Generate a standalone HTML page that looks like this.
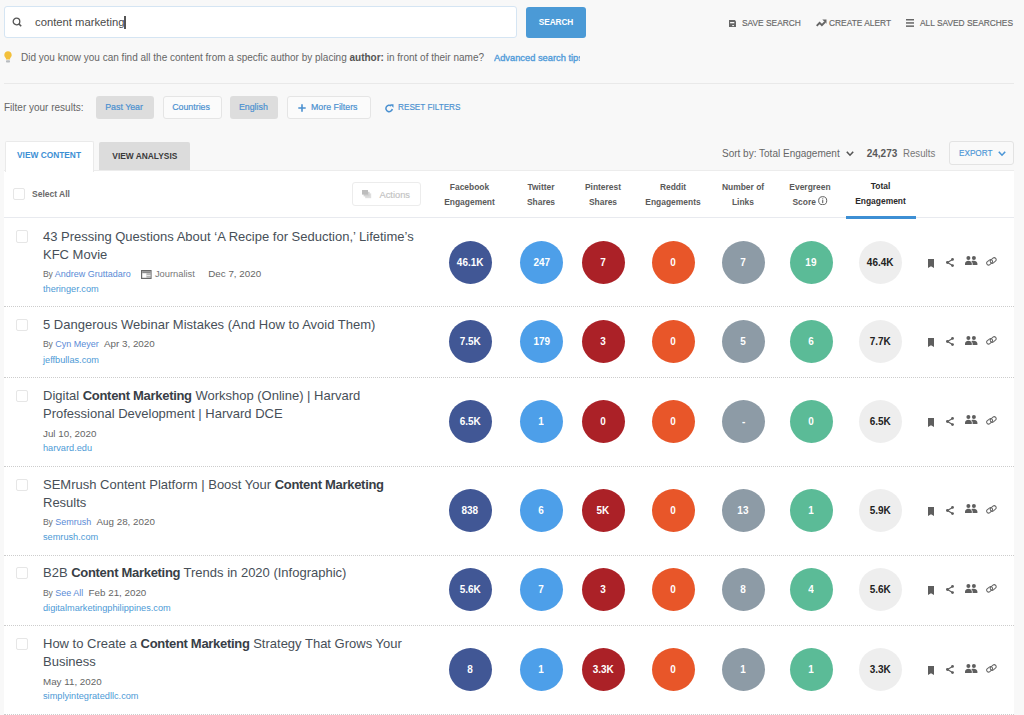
<!DOCTYPE html>
<html><head><meta charset="utf-8">
<style>
*{box-sizing:border-box;margin:0;padding:0}
html,body{width:1024px;height:715px;overflow:hidden;background:#f8f8f8;font-family:"Liberation Sans",sans-serif;color:#555}
.a{position:absolute}
.nw{white-space:nowrap}
#search{left:4px;top:6px;width:513px;height:32px;background:#fff;border:1px solid #d5e5f3;border-radius:3px}
#sbtn{left:526px;top:6.5px;width:60px;height:31.5px;background:#4b9ad6;border-radius:3px;color:#fff;font-size:8.3px;font-weight:bold;letter-spacing:-0.1px;text-align:center;line-height:31.5px}
.tl{font-size:9.3px;color:#666;top:18.2px;-webkit-text-stroke:0.15px #666;line-height:10px;white-space:nowrap;transform:scaleX(0.9);transform-origin:0 0}
.tip{font-size:10px;color:#666;top:52px;line-height:12px;white-space:nowrap}
.sx{display:inline-block;transform:scaleX(0.94);margin-right:2px}
.fbtn{top:96px;height:23.3px;border-radius:3px;font-size:9.4px;color:#4a90d0;-webkit-text-stroke:0.2px #4a90d0;line-height:22.8px;text-align:center;white-space:nowrap}
.fg{background:#dddddd}
.fw{background:#fbfbfb;border:1px solid #e5e5e5;line-height:20.8px}
#panel{left:4px;top:170px;width:1010px;height:545px;background:#fff;border-top:1px solid #ececec}
.hd{font-size:8.45px;color:#5a5a5a;font-weight:bold;text-align:center;line-height:15px;top:179.5px;white-space:nowrap}
.row{left:4px;width:1010px;border-bottom:1px dotted #cdcdcd}
.cb{left:15.5px;width:12.2px;height:12.2px;border:1px solid #e6e6e6;border-radius:2px;background:#fff}
.title{left:43px;font-size:13px;line-height:18.3px;color:#474f58}
.title b{color:#383e46;letter-spacing:-0.3px}
.meta{left:43px;font-size:9px;color:#666;white-space:nowrap;line-height:11px}
.meta .au{color:#5b8bd6;margin-left:0px}
.meta .by{font-size:8.6px;letter-spacing:-0.2px;color:#6a6a6a}
.meta .dt{margin-left:5.4px;font-size:9.8px}
.meta .dt0{font-size:9.8px}
.meta .jd{margin-left:13.4px;font-size:9.8px}
.meta .jr{margin-left:3px;font-size:9.35px}
.meta .jicon{display:inline-block;width:10.6px;height:9px;margin-left:10.6px;vertical-align:-1.5px;position:relative;top:1px}
.meta .jr{color:#777}
.dom{left:43px;font-size:9.2px;color:#4d9ad6;white-space:nowrap;line-height:11px}
.c span{display:inline-block;transform:scaleX(0.94)}
.c{width:43px;height:43px;border-radius:50%;color:#fff;font-size:10.6px;font-weight:bold;text-align:center;line-height:43px}
.fb{background:#415795}.tw{background:#4d9fe9}.pi{background:#ab2127}.rd{background:#e85629}.ln{background:#8d9ba6}.ev{background:#5bbb97}.te{background:#eeeeee;color:#222}

</style></head><body>
<div id="search" class="a"></div>
<svg class="a" style="left:12px;top:17px" width="10" height="10" viewBox="0 0 10 10"><circle cx="4.5" cy="4.5" r="3.3" stroke="#555" stroke-width="1.3" fill="none"/><path d="M6.9 6.9L9.2 9.2" stroke="#555" stroke-width="1.5"/></svg>
<div class="a nw" style="left:35px;top:15px;font-size:11.25px;line-height:14px;color:#4a4a4a">content marketing</div>
<div class="a" style="left:124.4px;top:16px;width:1.2px;height:12.7px;background:#555"></div>
<div id="sbtn" class="a">SEARCH</div>
<svg class="a" style="left:728.9px;top:19.9px" width="7" height="7.2" viewBox="0 0 7 7.2"><path d="M0 0h5.8L7 1.2V7.2H0z" fill="#666"/><rect x="1.1" y="2" width="4.2" height="1.3" fill="#f8f8f8"/><rect x="3.2" y="5" width="1.8" height="1.1" fill="#eee"/></svg>
<div class="a tl" style="left:742px">SAVE SEARCH</div>
<svg class="a" style="left:815.5px;top:19px" width="11" height="8" viewBox="0 0 11 8"><path d="M0.7 6.8L3.6 3.8l2.3 2.3L9 3" stroke="#666" stroke-width="1.9" fill="none"/><path d="M6.3 0.6h4.2v4.2z" fill="#666"/></svg>
<div class="a tl" style="left:829px">CREATE ALERT</div>
<svg class="a" style="left:906px;top:19px" width="8" height="8" viewBox="0 0 8 8"><rect y="0" width="8" height="1.5" fill="#666"/><rect y="3.2" width="8" height="1.5" fill="#666"/><rect y="6.4" width="8" height="1.5" fill="#666"/></svg>
<div class="a tl" style="left:919.5px">ALL SAVED SEARCHES</div>
<svg class="a" style="left:4px;top:51px" width="8" height="12" viewBox="0 0 8 12"><path d="M4 0.3C1.9 0.3 0.3 1.9 0.3 3.9c0 1.4 0.8 2.4 1.6 3.3V8.5h4.2V7.2c0.8-0.9 1.6-1.9 1.6-3.3C7.7 1.9 6.1 0.3 4 0.3z" fill="#f3c03b"/><rect x="2" y="9.2" width="4" height="2.3" rx="0.8" fill="#b8bcc0"/></svg>
<div class="a tip" style="left:21px">Did you know you can find all the content from a specfic author by placing <b style="color:#555">author:</b> in front of their name?</div>
<div class="a tip" style="left:494px;top:51.5px;width:86px;overflow:hidden;color:#509bd9;font-size:9.3px;-webkit-text-stroke:0.35px #509bd9">Advanced search tips</div>
<div class="a" style="left:4px;top:83px;width:1010px;height:1px;background:#e9e9e9"></div>
<div class="a nw" style="left:4px;top:102px;font-size:10px;line-height:12px;color:#666">Filter your results:</div>
<div class="a fbtn fg" style="left:96px;width:58px"><span class="sx">Past Year</span></div>
<div class="a fbtn fw" style="left:163px;width:58.5px"><span class="sx">Countries</span></div>
<div class="a fbtn fg" style="left:230px;width:48.4px"><span class="sx">English</span></div>
<div class="a fbtn fw" style="left:287px;width:83.5px;text-align:left;padding-left:23px"><span class="sx" style="transform-origin:0 50%">More Filters</span></div>
<svg class="a" style="left:298px;top:103.5px" width="8" height="8" viewBox="0 0 8 8"><path d="M4 0.3V7.7M0.3 4H7.7" stroke="#4a90d0" stroke-width="1.6"/></svg>
<svg class="a" style="left:385px;top:103.5px" width="9" height="9" viewBox="0 0 9 9"><path d="M7.3 5A3.2 3.2 0 1 1 6.2 2" stroke="#4a90d0" stroke-width="1.5" fill="none"/><path d="M5 0.3L8.5 0.3 8.5 3.8z" fill="#4a90d0"/></svg>
<div class="a nw" style="left:397.5px;top:100.8px;font-size:9px;line-height:12px;color:#4a90d0;-webkit-text-stroke:0.15px #4a90d0;transform:scaleX(0.91);transform-origin:0 0">RESET FILTERS</div>

<div class="a" style="left:99.3px;top:141.8px;width:91px;height:28.4px;background:#dcdcdc;border-radius:2px 2px 0 0"></div>
<div class="a nw" style="left:99.3px;top:149.5px;width:91px;text-align:center;font-size:8.4px;font-weight:bold;line-height:12px;color:#3a3a3a">VIEW ANALYSIS</div>
<div class="a nw" style="left:722px;top:148px;font-size:10px;line-height:12px;color:#666">Sort by: Total Engagement</div>
<svg class="a" style="left:845.6px;top:151px" width="8" height="6" viewBox="0 0 8 6"><path d="M0.8 0.8L4 4.2 7.2 0.8" stroke="#555" stroke-width="1.6" fill="none"/></svg>
<div class="a nw" style="left:866.7px;top:148.2px;font-size:10px;line-height:12px;color:#5a5a5a;font-weight:bold">24,273</div>
<div class="a nw" style="left:902.8px;top:147.6px;font-size:10.4px;line-height:12px;color:#777;transform:scaleX(0.93);transform-origin:0 0">Results</div>
<div class="a" style="left:949.4px;top:141.4px;width:64.3px;height:23.2px;background:#f9f9f9;border:1px solid #e3e3e3;border-radius:3px"></div>
<div class="a nw" style="left:958.5px;top:147.3px;font-size:9.2px;line-height:12px;color:#4a95d6;-webkit-text-stroke:0.15px #4a95d6;transform:scaleX(0.89);transform-origin:0 0">EXPORT</div>
<svg class="a" style="left:998px;top:150.5px" width="8" height="6" viewBox="0 0 8 6"><path d="M0.8 0.8L4 4.2 7.2 0.8" stroke="#4a95d6" stroke-width="1.6" fill="none"/></svg>
<div id="panel" class="a"></div>
<div class="a" style="left:4.5px;top:141.4px;width:89px;height:30.6px;background:#fff;border:1px solid #eaeaea;border-bottom:none;border-radius:2px 2px 0 0"></div>
<div class="a nw" style="left:4.5px;top:149px;width:89px;text-align:center;font-size:8.35px;font-weight:bold;line-height:12px;color:#3d8fd4">VIEW CONTENT</div>
<div class="a" style="left:4px;top:217px;width:1010px;height:1px;background:#e8eaef"></div>
<div class="a cb" style="left:13.3px;top:188px"></div>
<div class="a nw" style="left:32px;top:188px;font-size:8.5px;line-height:12px;color:#6a6a6a;font-weight:bold">Select All</div>
<div class="a" style="left:351.6px;top:182px;width:69px;height:23.7px;border:1px solid #ececec;border-radius:3px"></div>
<svg class="a" style="left:362px;top:189.8px" width="10" height="9" viewBox="0 0 10 9"><rect x="3.2" y="3.4" width="6" height="4.8" fill="#dedede"/><rect x="1.6" y="1.8" width="6" height="4.6" fill="#d2d2d2"/><rect x="0" y="0" width="6" height="4.6" fill="#bdbdbd"/></svg>
<div class="a nw" style="left:379.5px;top:188.5px;font-size:9.3px;line-height:12px;color:#c2c2c2;-webkit-text-stroke:0.15px #c2c2c2">Actions</div>
<div class="a hd" style="left:429.5px;width:80px">Facebook<br>Engagement</div>
<div class="a hd" style="left:501px;width:80px">Twitter<br>Shares</div>
<div class="a hd" style="left:563px;width:80px">Pinterest<br>Shares</div>
<div class="a hd" style="left:633px;width:80px">Reddit<br>Engagements</div>
<div class="a hd" style="left:703px;width:80px">Number of<br>Links</div>
<div class="a hd" style="left:770px;width:80px">Evergreen<br>Score <svg style="display:inline-block;vertical-align:0;position:relative;top:0.8px" width="9.4" height="9.4" viewBox="0 0 10 10"><circle cx="5" cy="5" r="4.3" stroke="#555" stroke-width="1" fill="none"/><rect x="4.4" y="4.3" width="1.2" height="3.3" fill="#666"/><rect x="4.4" y="2.5" width="1.2" height="1.1" fill="#666"/></svg></div>
<div class="a hd" style="left:840.5px;width:80px;color:#2a2a2a;top:178.7px">Total<br>Engagement</div>
<div class="a" style="left:846px;top:216.2px;width:69.5px;height:2.8px;background:#3d8fd4"></div>
<div class="a row" style="top:217.6px;height:89.7px"></div>
<div class="a cb" style="top:230.4px"></div>
<div class="a title nw" style="top:227.5px">43 Pressing Questions About ‘A Recipe for Seduction,’ Lifetime’s<br>KFC Movie</div>
<div class="a meta" style="top:267.6px"><span class="by">By</span> <span class="au">Andrew Gruttadaro</span><svg class="jicon" viewBox="0 0 10.6 9"><rect x="0.6" y="0.6" width="9.4" height="7.8" fill="#fff" stroke="#6a6a6a" stroke-width="1.2"/><rect x="1.2" y="1.2" width="8.2" height="2" fill="#8c8c8c"/><rect x="5.4" y="3.2" width="4" height="4.6" fill="#b5b5b5"/><rect x="5.4" y="5.2" width="4" height="0.7" fill="#fff"/></svg><span class="jr">Journalist</span><span class="jd">Dec 7, 2020</span></div>
<div class="a dom" style="top:284.0px">theringer.com</div>
<div class="a c fb" style="left:448.8px;top:240.5px"><span>46.1K</span></div>
<div class="a c tw" style="left:519.9px;top:240.5px"><span>247</span></div>
<div class="a c pi" style="left:581.6px;top:240.5px"><span>7</span></div>
<div class="a c rd" style="left:651.9px;top:240.5px"><span>0</span></div>
<div class="a c ln" style="left:721.8px;top:240.5px"><span>7</span></div>
<div class="a c ev" style="left:789.5px;top:240.5px"><span>19</span></div>
<div class="a c te" style="left:859.0px;top:240.5px"><span>46.4K</span></div>
<svg class="a" style="left:928.2px;top:258.7px" width="6" height="9" viewBox="0 0 6 9"><path d="M0 0h6v9L3 7.3 0 9z" fill="#5e5e5e"/></svg>
<svg class="a" style="left:946px;top:257.8px" width="8" height="9" viewBox="0 0 8 9"><path d="M6.5 1.5L1.5 4.5l5 3" stroke="#5e5e5e" stroke-width="1.2" fill="none"/><circle cx="6.5" cy="1.4" r="1.4" fill="#5e5e5e"/><circle cx="1.4" cy="4.5" r="1.4" fill="#5e5e5e"/><circle cx="6.5" cy="7.6" r="1.4" fill="#5e5e5e"/></svg>
<svg class="a" style="left:964.5px;top:256.0px" width="13" height="9" viewBox="0 0 13 9"><circle cx="3.4" cy="2" r="2" fill="#5e5e5e"/><circle cx="8.9" cy="2" r="2" fill="#5e5e5e"/><path d="M0 9V7.6C0 6 1.7 4.8 3.4 4.8S6.8 6 6.8 7.6V9z" fill="#5e5e5e"/><path d="M6.2 5.2C7 4.9 7.9 4.8 8.9 4.8 10.6 4.8 12.4 6 12.4 7.6V9H7.6V7.6C7.6 6.6 7.1 5.8 6.2 5.2z" fill="#5e5e5e"/></svg>
<svg class="a" style="left:985.5px;top:256.8px" width="11" height="9" viewBox="0 0 11 9"><g stroke="#666" stroke-width="1" fill="none"><rect x="0.4" y="3.4" width="6.4" height="3.8" rx="1.9" transform="rotate(-40 3.6 5.3)"/><rect x="4" y="1.6" width="6.4" height="3.8" rx="1.9" transform="rotate(-40 7.2 3.5)"/></g></svg>
<div class="a row" style="top:306.4px;height:71.3px"></div>
<div class="a cb" style="top:319.2px"></div>
<div class="a title nw" style="top:316.3px">5 Dangerous Webinar Mistakes (And How to Avoid Them)</div>
<div class="a meta" style="top:338.1px"><span class="by">By</span> <span class="au">Cyn Meyer</span><span class="dt">Apr 3, 2020</span></div>
<div class="a dom" style="top:354.5px">jeffbullas.com</div>
<div class="a c fb" style="left:448.8px;top:320.1px"><span>7.5K</span></div>
<div class="a c tw" style="left:519.9px;top:320.1px"><span>179</span></div>
<div class="a c pi" style="left:581.6px;top:320.1px"><span>3</span></div>
<div class="a c rd" style="left:651.9px;top:320.1px"><span>0</span></div>
<div class="a c ln" style="left:721.8px;top:320.1px"><span>5</span></div>
<div class="a c ev" style="left:789.5px;top:320.1px"><span>6</span></div>
<div class="a c te" style="left:859.0px;top:320.1px"><span>7.7K</span></div>
<svg class="a" style="left:928.2px;top:338.3px" width="6" height="9" viewBox="0 0 6 9"><path d="M0 0h6v9L3 7.3 0 9z" fill="#5e5e5e"/></svg>
<svg class="a" style="left:946px;top:337.4px" width="8" height="9" viewBox="0 0 8 9"><path d="M6.5 1.5L1.5 4.5l5 3" stroke="#5e5e5e" stroke-width="1.2" fill="none"/><circle cx="6.5" cy="1.4" r="1.4" fill="#5e5e5e"/><circle cx="1.4" cy="4.5" r="1.4" fill="#5e5e5e"/><circle cx="6.5" cy="7.6" r="1.4" fill="#5e5e5e"/></svg>
<svg class="a" style="left:964.5px;top:335.6px" width="13" height="9" viewBox="0 0 13 9"><circle cx="3.4" cy="2" r="2" fill="#5e5e5e"/><circle cx="8.9" cy="2" r="2" fill="#5e5e5e"/><path d="M0 9V7.6C0 6 1.7 4.8 3.4 4.8S6.8 6 6.8 7.6V9z" fill="#5e5e5e"/><path d="M6.2 5.2C7 4.9 7.9 4.8 8.9 4.8 10.6 4.8 12.4 6 12.4 7.6V9H7.6V7.6C7.6 6.6 7.1 5.8 6.2 5.2z" fill="#5e5e5e"/></svg>
<svg class="a" style="left:985.5px;top:336.4px" width="11" height="9" viewBox="0 0 11 9"><g stroke="#666" stroke-width="1" fill="none"><rect x="0.4" y="3.4" width="6.4" height="3.8" rx="1.9" transform="rotate(-40 3.6 5.3)"/><rect x="4" y="1.6" width="6.4" height="3.8" rx="1.9" transform="rotate(-40 7.2 3.5)"/></g></svg>
<div class="a row" style="top:376.8px;height:89.8px"></div>
<div class="a cb" style="top:389.6px"></div>
<div class="a title nw" style="top:386.7px">Digital <b>Content Marketing</b> Workshop (Online) | Harvard<br>Professional Development | Harvard DCE</div>
<div class="a meta" style="top:427.9px"><span class="dt0">Jul 10, 2020</span></div>
<div class="a dom" style="top:442.8px">harvard.edu</div>
<div class="a c fb" style="left:448.8px;top:399.8px"><span>6.5K</span></div>
<div class="a c tw" style="left:519.9px;top:399.8px"><span>1</span></div>
<div class="a c pi" style="left:581.6px;top:399.8px"><span>0</span></div>
<div class="a c rd" style="left:651.9px;top:399.8px"><span>0</span></div>
<div class="a c ln" style="left:721.8px;top:399.8px"><span>-</span></div>
<div class="a c ev" style="left:789.5px;top:399.8px"><span>0</span></div>
<div class="a c te" style="left:859.0px;top:399.8px"><span>6.5K</span></div>
<svg class="a" style="left:928.2px;top:417.9px" width="6" height="9" viewBox="0 0 6 9"><path d="M0 0h6v9L3 7.3 0 9z" fill="#5e5e5e"/></svg>
<svg class="a" style="left:946px;top:417.1px" width="8" height="9" viewBox="0 0 8 9"><path d="M6.5 1.5L1.5 4.5l5 3" stroke="#5e5e5e" stroke-width="1.2" fill="none"/><circle cx="6.5" cy="1.4" r="1.4" fill="#5e5e5e"/><circle cx="1.4" cy="4.5" r="1.4" fill="#5e5e5e"/><circle cx="6.5" cy="7.6" r="1.4" fill="#5e5e5e"/></svg>
<svg class="a" style="left:964.5px;top:415.2px" width="13" height="9" viewBox="0 0 13 9"><circle cx="3.4" cy="2" r="2" fill="#5e5e5e"/><circle cx="8.9" cy="2" r="2" fill="#5e5e5e"/><path d="M0 9V7.6C0 6 1.7 4.8 3.4 4.8S6.8 6 6.8 7.6V9z" fill="#5e5e5e"/><path d="M6.2 5.2C7 4.9 7.9 4.8 8.9 4.8 10.6 4.8 12.4 6 12.4 7.6V9H7.6V7.6C7.6 6.6 7.1 5.8 6.2 5.2z" fill="#5e5e5e"/></svg>
<svg class="a" style="left:985.5px;top:416.1px" width="11" height="9" viewBox="0 0 11 9"><g stroke="#666" stroke-width="1" fill="none"><rect x="0.4" y="3.4" width="6.4" height="3.8" rx="1.9" transform="rotate(-40 3.6 5.3)"/><rect x="4" y="1.6" width="6.4" height="3.8" rx="1.9" transform="rotate(-40 7.2 3.5)"/></g></svg>
<div class="a row" style="top:465.7px;height:89.9px"></div>
<div class="a cb" style="top:478.5px"></div>
<div class="a title nw" style="top:475.6px">SEMrush Content Platform | Boost Your <b>Content Marketing</b><br>Results</div>
<div class="a meta" style="top:515.7px"><span class="by">By</span> <span class="au">Semrush</span><span class="dt">Aug 28, 2020</span></div>
<div class="a dom" style="top:532.1px">semrush.com</div>
<div class="a c fb" style="left:448.8px;top:488.7px"><span>838</span></div>
<div class="a c tw" style="left:519.9px;top:488.7px"><span>6</span></div>
<div class="a c pi" style="left:581.6px;top:488.7px"><span>5K</span></div>
<div class="a c rd" style="left:651.9px;top:488.7px"><span>0</span></div>
<div class="a c ln" style="left:721.8px;top:488.7px"><span>13</span></div>
<div class="a c ev" style="left:789.5px;top:488.7px"><span>1</span></div>
<div class="a c te" style="left:859.0px;top:488.7px"><span>5.9K</span></div>
<svg class="a" style="left:928.2px;top:506.9px" width="6" height="9" viewBox="0 0 6 9"><path d="M0 0h6v9L3 7.3 0 9z" fill="#5e5e5e"/></svg>
<svg class="a" style="left:946px;top:506.0px" width="8" height="9" viewBox="0 0 8 9"><path d="M6.5 1.5L1.5 4.5l5 3" stroke="#5e5e5e" stroke-width="1.2" fill="none"/><circle cx="6.5" cy="1.4" r="1.4" fill="#5e5e5e"/><circle cx="1.4" cy="4.5" r="1.4" fill="#5e5e5e"/><circle cx="6.5" cy="7.6" r="1.4" fill="#5e5e5e"/></svg>
<svg class="a" style="left:964.5px;top:504.2px" width="13" height="9" viewBox="0 0 13 9"><circle cx="3.4" cy="2" r="2" fill="#5e5e5e"/><circle cx="8.9" cy="2" r="2" fill="#5e5e5e"/><path d="M0 9V7.6C0 6 1.7 4.8 3.4 4.8S6.8 6 6.8 7.6V9z" fill="#5e5e5e"/><path d="M6.2 5.2C7 4.9 7.9 4.8 8.9 4.8 10.6 4.8 12.4 6 12.4 7.6V9H7.6V7.6C7.6 6.6 7.1 5.8 6.2 5.2z" fill="#5e5e5e"/></svg>
<svg class="a" style="left:985.5px;top:505.0px" width="11" height="9" viewBox="0 0 11 9"><g stroke="#666" stroke-width="1" fill="none"><rect x="0.4" y="3.4" width="6.4" height="3.8" rx="1.9" transform="rotate(-40 3.6 5.3)"/><rect x="4" y="1.6" width="6.4" height="3.8" rx="1.9" transform="rotate(-40 7.2 3.5)"/></g></svg>
<div class="a row" style="top:554.0px;height:72.1px"></div>
<div class="a cb" style="top:566.8px"></div>
<div class="a title nw" style="top:563.9px">B2B <b>Content Marketing</b> Trends in 2020 (Infographic)</div>
<div class="a meta" style="top:586.5px"><span class="by">By</span> <span class="au">See All</span><span class="dt">Feb 21, 2020</span></div>
<div class="a dom" style="top:602.9px">digitalmarketingphilippines.com</div>
<div class="a c fb" style="left:448.8px;top:568.1px"><span>5.6K</span></div>
<div class="a c tw" style="left:519.9px;top:568.1px"><span>7</span></div>
<div class="a c pi" style="left:581.6px;top:568.1px"><span>3</span></div>
<div class="a c rd" style="left:651.9px;top:568.1px"><span>0</span></div>
<div class="a c ln" style="left:721.8px;top:568.1px"><span>8</span></div>
<div class="a c ev" style="left:789.5px;top:568.1px"><span>4</span></div>
<div class="a c te" style="left:859.0px;top:568.1px"><span>5.6K</span></div>
<svg class="a" style="left:928.2px;top:586.3px" width="6" height="9" viewBox="0 0 6 9"><path d="M0 0h6v9L3 7.3 0 9z" fill="#5e5e5e"/></svg>
<svg class="a" style="left:946px;top:585.4px" width="8" height="9" viewBox="0 0 8 9"><path d="M6.5 1.5L1.5 4.5l5 3" stroke="#5e5e5e" stroke-width="1.2" fill="none"/><circle cx="6.5" cy="1.4" r="1.4" fill="#5e5e5e"/><circle cx="1.4" cy="4.5" r="1.4" fill="#5e5e5e"/><circle cx="6.5" cy="7.6" r="1.4" fill="#5e5e5e"/></svg>
<svg class="a" style="left:964.5px;top:583.6px" width="13" height="9" viewBox="0 0 13 9"><circle cx="3.4" cy="2" r="2" fill="#5e5e5e"/><circle cx="8.9" cy="2" r="2" fill="#5e5e5e"/><path d="M0 9V7.6C0 6 1.7 4.8 3.4 4.8S6.8 6 6.8 7.6V9z" fill="#5e5e5e"/><path d="M6.2 5.2C7 4.9 7.9 4.8 8.9 4.8 10.6 4.8 12.4 6 12.4 7.6V9H7.6V7.6C7.6 6.6 7.1 5.8 6.2 5.2z" fill="#5e5e5e"/></svg>
<svg class="a" style="left:985.5px;top:584.4px" width="11" height="9" viewBox="0 0 11 9"><g stroke="#666" stroke-width="1" fill="none"><rect x="0.4" y="3.4" width="6.4" height="3.8" rx="1.9" transform="rotate(-40 3.6 5.3)"/><rect x="4" y="1.6" width="6.4" height="3.8" rx="1.9" transform="rotate(-40 7.2 3.5)"/></g></svg>
<div class="a row" style="top:625.2px;height:89.5px"></div>
<div class="a cb" style="top:638.0px"></div>
<div class="a title nw" style="top:635.1px">How to Create a <b>Content Marketing</b> Strategy That Grows Your<br>Business</div>
<div class="a meta" style="top:676.3px"><span class="dt0">May 11, 2020</span></div>
<div class="a dom" style="top:691.2px">simplyintegratedllc.com</div>
<div class="a c fb" style="left:448.8px;top:648.0px"><span>8</span></div>
<div class="a c tw" style="left:519.9px;top:648.0px"><span>1</span></div>
<div class="a c pi" style="left:581.6px;top:648.0px"><span>3.3K</span></div>
<div class="a c rd" style="left:651.9px;top:648.0px"><span>0</span></div>
<div class="a c ln" style="left:721.8px;top:648.0px"><span>1</span></div>
<div class="a c ev" style="left:789.5px;top:648.0px"><span>1</span></div>
<div class="a c te" style="left:859.0px;top:648.0px"><span>3.3K</span></div>
<svg class="a" style="left:928.2px;top:666.2px" width="6" height="9" viewBox="0 0 6 9"><path d="M0 0h6v9L3 7.3 0 9z" fill="#5e5e5e"/></svg>
<svg class="a" style="left:946px;top:665.3px" width="8" height="9" viewBox="0 0 8 9"><path d="M6.5 1.5L1.5 4.5l5 3" stroke="#5e5e5e" stroke-width="1.2" fill="none"/><circle cx="6.5" cy="1.4" r="1.4" fill="#5e5e5e"/><circle cx="1.4" cy="4.5" r="1.4" fill="#5e5e5e"/><circle cx="6.5" cy="7.6" r="1.4" fill="#5e5e5e"/></svg>
<svg class="a" style="left:964.5px;top:663.5px" width="13" height="9" viewBox="0 0 13 9"><circle cx="3.4" cy="2" r="2" fill="#5e5e5e"/><circle cx="8.9" cy="2" r="2" fill="#5e5e5e"/><path d="M0 9V7.6C0 6 1.7 4.8 3.4 4.8S6.8 6 6.8 7.6V9z" fill="#5e5e5e"/><path d="M6.2 5.2C7 4.9 7.9 4.8 8.9 4.8 10.6 4.8 12.4 6 12.4 7.6V9H7.6V7.6C7.6 6.6 7.1 5.8 6.2 5.2z" fill="#5e5e5e"/></svg>
<svg class="a" style="left:985.5px;top:664.3px" width="11" height="9" viewBox="0 0 11 9"><g stroke="#666" stroke-width="1" fill="none"><rect x="0.4" y="3.4" width="6.4" height="3.8" rx="1.9" transform="rotate(-40 3.6 5.3)"/><rect x="4" y="1.6" width="6.4" height="3.8" rx="1.9" transform="rotate(-40 7.2 3.5)"/></g></svg>
</body></html>
